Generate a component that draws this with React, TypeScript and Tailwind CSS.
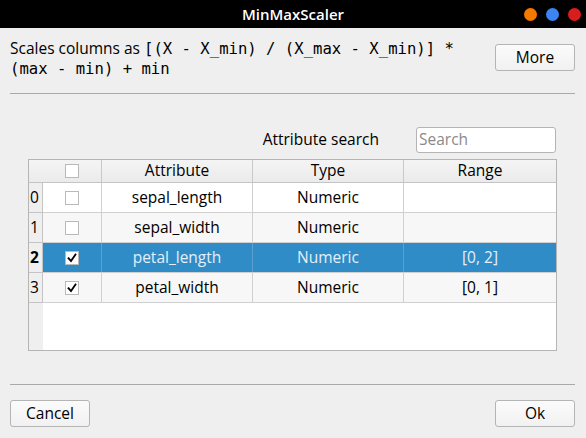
import React from 'react'

type Row = { n: string; name: string; type: string; range: string; checked: boolean; selected?: boolean }

const rows: Row[] = [
  { n: '0', name: 'sepal_length', type: 'Numeric', range: '', checked: false },
  { n: '1', name: 'sepal_width', type: 'Numeric', range: '', checked: false },
  { n: '2', name: 'petal_length', type: 'Numeric', range: '[0, 2]', checked: true, selected: true },
  { n: '3', name: 'petal_width', type: 'Numeric', range: '[0, 1]', checked: true },
]

function CheckBox({ checked }: { checked: boolean }) {
  return (
    <span className="flex h-[14px] w-[14px] items-center justify-center border border-[#b9b9b9] bg-white">
      {checked && (
        <svg width="10" height="10" viewBox="0 0 10 10" fill="none">
          <path d="M1.5 5.2 L4 8 L8.5 1.5" stroke="#000" strokeWidth="1.8" strokeLinecap="square" />
        </svg>
      )}
    </span>
  )
}

function Button({ label }: { label: string }) {
  return (
    <button className="flex h-[27px] w-[80px] items-center justify-center rounded-[3px] border border-[#b4b4b4] bg-gradient-to-b from-[#fbfbfb] to-[#f1f1f1] text-[15.5px] text-black">
      {label}
    </button>
  )
}

export default function App() {
  const mono = "font-['DejaVu_Sans_Mono',monospace] text-[15.6px]"
  return (
    <div className="flex h-[438px] w-[586px] flex-col overflow-hidden bg-[#efefef] font-['Open_Sans','Noto_Sans',sans-serif] text-black">
      {/* Title bar */}
      <div className="relative flex h-[28px] shrink-0 items-center justify-center bg-black">
        <span className="text-[15px] font-semibold text-white">MinMaxScaler</span>
        <div className="absolute right-[5px] top-[8px] flex gap-[9px]">
          <span className="h-[13px] w-[13px] rounded-full bg-[#f57900]" />
          <span className="h-[13px] w-[13px] rounded-full bg-[#3c84f0]" />
          <span className="h-[13px] w-[13px] rounded-full bg-[#d61e1e]" />
        </div>
      </div>

      {/* Description */}
      <div className="flex items-start justify-between pl-[10px] pr-[11px] pt-[11px]">
        <p className="text-[15.5px] leading-[19px]">
          Scales columns as <span className={mono}>[(X - X_min) / (X_max - X_min)] *</span>
          <br />
          <span className={mono}>(max - min) + min</span>
        </p>
        <div className="mt-[5px]">
          <Button label="More" />
        </div>
      </div>

      <div className="ml-[10px] mr-[11px] mt-[14px] h-px bg-[#a9a9a9]" />

      {/* Search */}
      <div className="mt-[33px] flex items-center justify-end pr-[30px]">
        <span className="text-[15.5px]">Attribute search</span>
        <div className="ml-[37px] flex h-[26px] w-[140px] items-center rounded-[3px] border border-[#b4b4b4] bg-white px-[2px] text-[15.5px] text-[#8a8a8a]">
          Search
        </div>
      </div>

      {/* Table */}
      <div className="ml-[28px] mt-[6px] flex h-[192px] w-[529px] flex-col border border-[#b5b5b5] bg-white text-[15.5px]">
        <div className="flex h-[23px] shrink-0 border-b border-[#c4c4c4] bg-gradient-to-b from-[#f4f4f4] to-[#ebebeb]">
          <div className="w-[14px]" />
          <div className="flex w-[59px] items-center justify-center border-r border-[#c9c9c9]">
            <CheckBox checked={false} />
          </div>
          <div className="flex w-[151px] items-center justify-center border-r border-[#c9c9c9]">Attribute</div>
          <div className="flex w-[151px] items-center justify-center border-r border-[#c9c9c9]">Type</div>
          <div className="flex flex-1 items-center justify-center">Range</div>
        </div>
        {rows.map((r, i) => {
          const bg = r.selected ? 'bg-[#308cc6] text-[#e4eff8]' : i % 2 === 1 ? 'bg-[#f7f7f7]' : 'bg-white'
          const line = r.selected ? 'border-[#5a9fcd]' : 'border-[#d0d0d0]'
          return (
            <div key={r.n} className="flex h-[30px] shrink-0">
              <div
                className={`flex w-[14px] items-center border-b border-r border-[#c4c4c4] bg-[#efefef] pl-[1px] ${r.selected ? 'font-bold' : ''}`}
              >
                {r.n}
              </div>
              <div className={`flex flex-1 border-b border-[#d0d0d0] ${bg}`}>
                <div className={`flex w-[59px] items-center justify-center border-r ${line}`}>
                  <CheckBox checked={r.checked} />
                </div>
                <div className={`flex w-[151px] items-center justify-center border-r ${line}`}>{r.name}</div>
                <div className={`flex w-[151px] items-center justify-center border-r ${line}`}>{r.type}</div>
                <div className="flex flex-1 items-center justify-center">{r.range}</div>
              </div>
            </div>
          )
        })}
        <div className="flex flex-1">
          <div className="w-[14px] bg-[#efefef]" />
          <div className="flex-1 bg-white" />
        </div>
      </div>

      <div className="ml-[10px] mr-[11px] mt-[33px] h-px bg-[#a9a9a9]" />

      {/* Footer */}
      <div className="mt-[15px] flex justify-between pl-[10px] pr-[11px]">
        <Button label="Cancel" />
        <Button label="Ok" />
      </div>
    </div>
  )
}
